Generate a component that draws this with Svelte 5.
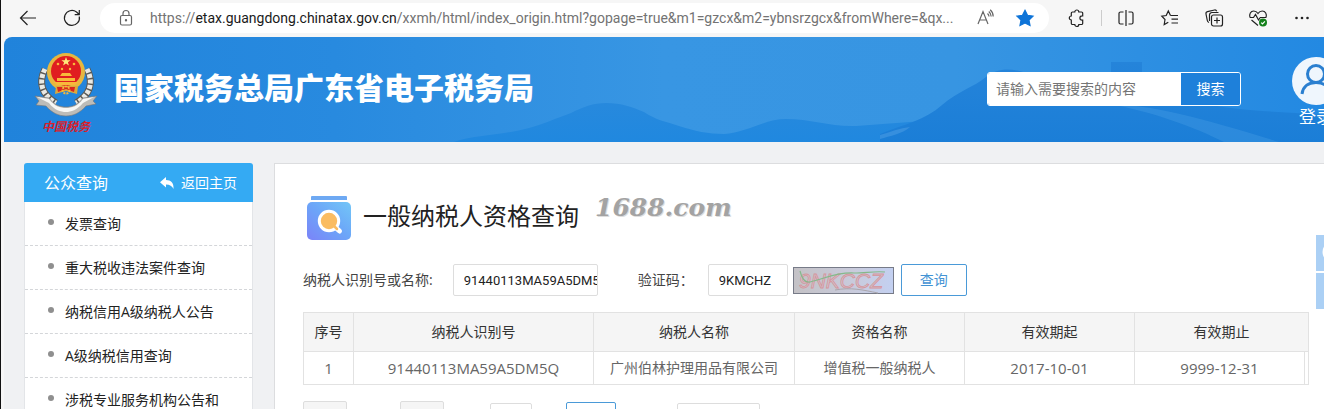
<script>
  const links = [
    '发票查询',
    '重大税收违法案件查询',
    '纳税信用A级纳税人公告',
    'A级纳税信用查询',
    '涉税专业服务机构公告和',
  ];
  const columns = ['序号', '纳税人识别号', '纳税人名称', '资格名称', '有效期起', '有效期止'];
  const rows = [
    ['1', '91440113MA59A5DM5Q', '广州伯林护理用品有限公司', '增值税一般纳税人', '2017-10-01', '9999-12-31'],
  ];
  const isLatin = (text) => /^[\w-]+$/.test(text);
  let keyword = $state('');
  let taxpayer = $state('91440113MA59A5DM5Q');
  let code = $state('9KMCHZ');
</script>

<div class="window">
  <div class="toolbar">
    <div class="nav">
      <button aria-label="后退">
        <svg viewBox="0 0 20 20"><path d="M18 10H2.500M9.500 3 2.500 10l7 7" /></svg>
      </button>
      <button aria-label="刷新">
        <svg viewBox="0 0 20 20"><path d="M17.300 8.500A7.500 7.500 0 1 1 14.500 4L17 6.300M17.300 2v4.600h-4.600" /></svg>
      </button>
    </div>
    <div class="address">
      <svg class="grey" viewBox="0 0 20 20"><rect x="4.500" y="7.500" width="11" height="9.500" rx="1.500" /><path d="M7 7.500V5.500a3 3 0 0 1 6 0v2" /><circle cx="10" cy="12.300" r=".6" fill="#555" /></svg>
      <span class="url">https://<b>etax.guangdong.chinatax.gov.cn</b>/xxmh/html/index_origin.html?gopage=true&amp;m1=gzcx&amp;m2=ybnsrzgcx&amp;fromWhere=&amp;qx...</span>
      <button aria-label="大声朗读">
        <svg class="grey" viewBox="0 0 20 20"><path d="M2 16 7 3.500 12 16M3.700 12h6.600M11.500 5.500a4 4 0 0 1 1.500 3M12.800 3.500a7 7 0 0 1 2.400 5M14.200 1.800a9 9 0 0 1 3 6.700" /></svg>
      </button>
      <button aria-label="收藏">
        <svg viewBox="0 0 20 20"><path class="star" d="m10 2.300 2.500 5 5.500.8-4 3.900 1 5.500-5-2.600-5 2.600 1-5.500-4-3.900 5.500-.8Z" /></svg>
      </button>
    </div>
    <div class="tools">
      <button aria-label="扩展">
        <svg viewBox="0 0 20 20"><path d="M5.500 4h2.300a2 2 0 0 1 4 0h2.700a1.200 1.200 0 0 1 1.200 1.200v2.600h-.6a2.200 2.200 0 0 0 0 4.400h.6v3.100a1.200 1.200 0 0 1-1.200 1.200h-2.700a2 2 0 0 1-4 0H5.500a1.200 1.200 0 0 1-1.200-1.200V12a2 2 0 0 1 0-4V5.200A1.200 1.200 0 0 1 5.500 4Z" /></svg>
      </button>
      <span class="divider"></span>
      <button aria-label="分屏">
        <svg viewBox="0 0 20 20"><path d="M7.500 4h-3A1.500 1.500 0 0 0 3 5.500v9A1.500 1.500 0 0 0 4.500 16h3M10 2v16M12.500 4h3A1.500 1.500 0 0 1 17 5.500v9a1.500 1.500 0 0 1-1.500 1.500h-3" /></svg>
      </button>
      <button aria-label="收藏夹">
        <svg viewBox="0 0 20 20"><path d="M10.500 7.500 8.300 3 6.200 7.500 1.800 8.200 5 11.500l-.8 5 4.100-2.300M10.500 7.500h7.500M11.500 11.200H18M11.500 15H18" /></svg>
      </button>
      <button aria-label="集锦">
        <svg viewBox="0 0 20 20"><rect x="7.500" y="7" width="11" height="11" rx="2" /><path d="M13 9.500v6M10 12.500h6M5 14.500c-1-.4-1.500-1-1.700-2L2 6a2 2 0 0 1 1.500-2.300L10.500 2a2 2 0 0 1 2.200 1.200M5.500 13V7A2.500 2.500 0 0 1 8 4.500h6.500" /></svg>
      </button>
      <button aria-label="浏览器概要">
        <svg viewBox="0 0 20 20"><path d="M2 9.500C.8 6 2.800 3 5.700 3 7.700 3 9 4 10 5.500 11 4 12.300 3 14.300 3c3 0 4.900 3 3.700 6.500M2 9.500h3.500l2-3 3 5.500 1.800-2.500H18M3.500 12l6.500 5.500" /><circle cx="15" cy="14.500" r="4" fill="#13801b" stroke="none" /><path class="tick" d="m13.200 14.600 1.300 1.300 2.400-2.600" /></svg>
      </button>
      <button aria-label="更多">
        <svg viewBox="0 0 20 20"><g fill="#222" stroke="none"><circle cx="4.500" cy="10" r="1.300" /><circle cx="10" cy="10" r="1.300" /><circle cx="15.500" cy="10" r="1.300" /></g></svg>
      </button>
    </div>
  </div>

  <div class="page">
    <header>
      <svg class="scenery" viewBox="0 0 1320 105" preserveAspectRatio="none">
        <defs>
          <linearGradient id="sky"><stop offset="0" stop-color="#2083db" /><stop offset=".25" stop-color="#288adf" /><stop offset=".5" stop-color="#3896e3" /><stop offset=".72" stop-color="#3795e2" /><stop offset="1" stop-color="#2389e2" /></linearGradient>
          <linearGradient id="hill" x2="0" y2="1"><stop offset="0" stop-color="#2789dd" /><stop offset="1" stop-color="#2088df" /></linearGradient>
          <linearGradient id="ridge" x2="0" y2="1"><stop offset="0" stop-color="#2584da" /><stop offset="1" stop-color="#1b7ed7" /></linearGradient>
        </defs>
        <path fill="url(#sky)" d="M0 0h1320v105H0z" />
        <path fill="url(#hill)" d="M450 105c20-7 50-7 75-14 17-5 25-9 42-15 12-6 22-10 35-10 16 0 26 4 38 9 12 8 20 9 35 14 15 5 30 8 45 8 22-1 40-15 62-15 25 0 45 8 70 7l80-6v22Z" />
        <path fill="url(#ridge)" d="M876 105v-8c25-10 45-14 62-29 16-14 32-18 44-28 14-11 30-9 50 0 25 5 50 5 75 2V25h31v12c20 5 35 24 60 29 35 8 70 8 122 12v27Z" />
        <path fill="#54a5e8" opacity=".3" d="M1105 67c40 0 100 16 170 38h-55c-30-15-70-30-115-38Z" />
        <path fill="#66b0ec" opacity=".35" d="M876 98c10-3 20-7 30-8-8 7-20 9-30 12Z" />
      </svg>

      <div class="logo">
        <svg viewBox="0 0 64 66">
          <g fill="none" stroke="#5c5a55" stroke-width="7"><path d="M11 18C4 32 8 44 22 52M53 18c7 14 3 26-11 34" /></g>
          <g fill="none" stroke="#e9e9e4" stroke-width="5" stroke-dasharray="4 1.500"><path d="M11 18C4 32 8 44 22 52M53 18c7 14 3 26-11 34" /></g>
          <path fill="#bdbcb8" stroke="#777" stroke-width=".6" d="m1 45 14 2c5 7 11 9 17 9s12-2 17-9l14-2-4 5 3 3-10 2c-6 7-13 10-20 10s-14-3-20-10l-10-1 3-4Z" />
          <path fill="#f7f7f5" d="m3 46 12 2c5 7 11 9 17 9s12-2 17-9l11-2-11 6c-6 7-12 9-17 9s-12-2-17-9Z" />
          <circle cx="32" cy="21" r="19" fill="#e7b73f" />
          <path fill="#dca93b" d="m22 35-1 8 11-3 11 3 1-8Z" />
          <circle cx="32" cy="20" r="15" fill="#e01d20" />
          <path fill="#d9251f" d="m23 36 1 5 8-3 8 3 1-5Z" />
          <path fill="#ffe97a" d="m32 6 1.200 3.200h3.400l-2.700 2 1 3.300-2.900-2-2.900 2 1-3.300-2.700-2h3.400Z" />
          <g fill="#f8b93a"><circle cx="24" cy="13" r="1.300" /><circle cx="28" cy="18" r="1.200" /><circle cx="36" cy="18" r="1.200" /><circle cx="40" cy="13" r="1.300" /><path d="M26 25h12l-2-3h-8Zm-3 2h18v3H23Zm-3 4h24l-3 3H23Z" /></g>
          <circle cx="32" cy="39" r="3.500" fill="none" stroke="#f8b93a" stroke-width="2" stroke-dasharray="2 1" />
        </svg>
        <span>中国税务</span>
      </div>
      <h1>国家税务总局广东省电子税务局</h1>
      <form class="search">
        <input aria-label="搜索内容" placeholder="请输入需要搜索的内容" bind:value={keyword} />
        <button type="button">搜索</button>
      </form>
      <a class="login" href="#login">
        <svg viewBox="0 0 48 48"><circle cx="24" cy="24" r="24" fill="#eff6fd" /><g fill="none" stroke="#2a7fd0" stroke-width="3"><circle cx="24" cy="17" r="8.500" /><path d="M10 37c1-8 7-11.500 14-11.500S37 29 38 37" /></g></svg>
        <span>登录</span>
      </a>
    </header>

    <div class="body">
      <aside>
        <div class="side-head">
          <h2>公众查询</h2>
          <a href="#home">
            <svg viewBox="0 0 14 12"><path fill="#fff" d="M6 0v3c5 0 8 3 7.500 9C12 9 10 7.500 6 7.500v3L0 5.200Z" /></svg>
            返回主页
          </a>
        </div>
        <ul>
          {#each links as link}
            <li><a href="#query">{link}</a></li>
          {/each}
        </ul>
      </aside>

      <main>
        <div class="title">
          <svg viewBox="0 0 44 44">
            <defs>
              <linearGradient id="card" x1="0" y1="1" x2="1" y2="0"><stop offset="0" stop-color="#7b83f8" /><stop offset=".5" stop-color="#6ca5f8" /><stop offset="1" stop-color="#72c6f7" /></linearGradient>
            </defs>
            <path fill="#6ea9f3" d="M5 0h34a1 1 0 0 1 1 1v3H4V1a1 1 0 0 1 1-1Z" />
            <rect y="6" width="44" height="38" rx="5" fill="url(#card)" />
            <path d="m28 31 4.500 4" stroke="#fff" stroke-width="5" stroke-linecap="round" />
            <circle cx="22" cy="25" r="9.700" fill="#fabc62" stroke="#fff" stroke-width="3" />
            <path d="m26 29 4 4" stroke="#fabc62" stroke-width="2.500" stroke-linecap="round" />
          </svg>
          <h2>一般纳税人资格查询</h2>
          <span class="mark">1688.com</span>
        </div>

        <form class="query">
          <label for="taxpayer">纳税人识别号或名称:</label>
          <input id="taxpayer" class="wide" bind:value={taxpayer} />
          <label for="code">验证码：</label>
          <input id="code" class="short" bind:value={code} />
          <svg class="captcha" viewBox="0 0 101 27">
            <defs><linearGradient id="noise"><stop offset="0" stop-color="#c4c2c6" /><stop offset=".6" stop-color="#c9cbdc" /><stop offset="1" stop-color="#c3d0f1" /></linearGradient></defs>
            <rect x=".5" y=".5" width="100" height="26" fill="url(#noise)" stroke="#777b88" />
            <text x="6" y="21">9NKCCZ</text>
            <path fill="none" stroke="#84b98a" stroke-width="1.200" d="M7 4c2 8 5 12 10 11 14-3 26-10 44-9 12 0 20-2 31-1" />
            <path fill="none" stroke="#aaa6ad" d="M42 23c16-3 28 0 43 3" />
          </svg>
          <button type="button">查询</button>
        </form>

        <table>
          <colgroup>
            <col class="c-index" /><col class="c-id" /><col /><col class="c-std" /><col class="c-std" /><col class="c-std" /><col class="c-edge" />
          </colgroup>
          <thead>
            <tr>
              {#each columns as column, i}
                <th colspan={i === columns.length - 1 ? 2 : 1}>{column}</th>
              {/each}
            </tr>
          </thead>
          <tbody>
            {#each rows as row}
              <tr>
                {#each row as cell}<td class:latin={isLatin(cell)}>{cell}</td>{/each}
                <td></td>
              </tr>
            {/each}
          </tbody>
        </table>

        <div class="pager">
          <button class="step" aria-label="上一页"></button>
          <button class="step" aria-label="下一页"></button>
          <input aria-label="页码" />
          <button class="go" aria-label="确定"></button>
          <select aria-label="每页条数"></select>
        </div>
      </main>
    </div>

    <div class="float">
      <a href="#service" aria-label="客服"><svg viewBox="0 0 24 24"><circle cx="12" cy="12" r="9" fill="none" stroke="#fff" stroke-width="3" /></svg></a>
      <a href="#top" aria-label="顶部"></a>
    </div>
  </div>
</div>

<style>
  :global(body) { margin: 0; }
  * { box-sizing: border-box; }
  .window {
    height: 100vh;
    overflow: hidden;
    display: flex;
    flex-direction: column;
    position: relative;
    border-left: 1px solid #111;
    background: #f6f6f6;
    font: 14px/20px "Open Sans", "Noto Sans CJK SC", sans-serif;
    color: #222;
  }
  button, input, select { font: inherit; color: inherit; margin: 0; }
  h1, h2, ul { margin: 0; padding: 0; font-weight: 400; }
  a { color: inherit; text-decoration: none; }
  svg { display: block; flex: none; }

  .toolbar {
    display: flex;
    align-items: center;
    gap: 18px;
    padding: 3px 12px 4px 17px;
  }
  .toolbar button { padding: 0; border: 0; background: none; }
  .toolbar svg { width: 20px; height: 20px; fill: none; stroke: #222; stroke-width: 1.2; }
  .toolbar .grey { stroke: #666; }
  .toolbar .star { fill: #0e74d8; stroke: #0e74d8; }
  .toolbar .tick { stroke: #fff; }
  .nav, .tools { display: flex; align-items: center; gap: 24px; }
  .address {
    flex: 1;
    min-width: 0;
    display: flex;
    align-items: center;
    gap: 14px;
    height: 30px;
    padding: 0 14px 0 16px;
    border-radius: 15px;
    background: #fff;
  }
  .address button + button { margin-left: 5px; }
  .url {
    flex: 1;
    min-width: 0;
    overflow: hidden;
    font-family: Roboto, sans-serif;
    white-space: nowrap;
    color: #737373;
  }
  .url b { font-weight: 400; color: #1a1a1a; }
  .divider { width: 1px; height: 16px; margin: 0 -10px; background: #ccc; }

  .page {
    flex: 1;
    min-height: 0;
    margin-left: 3px;
    overflow: hidden;
    border-top-left-radius: 8px;
    background: #f0f1f3;
  }
  header {
    position: relative;
    display: flex;
    align-items: center;
    height: 105px;
    padding-left: 30px;
    color: #fff;
  }
  header > * { position: relative; }
  .scenery { position: absolute; inset: 0; width: 100%; height: 100%; }
  .logo { width: 64px; margin-top: 6px; }
  .logo svg { width: 64px; height: 66px; }
  .logo span {
    display: block;
    font: italic 700 12px/18px "Noto Sans CJK SC", sans-serif;
    color: #d8202c;
    text-align: center;
  }
  h1 {
    margin: 0 auto 4px 16px;
    font-size: 30px;
    line-height: 40px;
    font-weight: 900;
    white-space: nowrap;
  }
  .search {
    display: flex;
    height: 34px;
    width: 254px;
    margin-bottom: 2px;
    border: 1px solid #fff;
    border-radius: 3px;
    overflow: hidden;
  }
  .search input {
    flex: 1;
    min-width: 0;
    padding: 0 8px;
    border: 0;
    background: #fff;
    color: #333;
  }
  .search input::placeholder { color: #757575; opacity: 1; }
  .search button { width: 59px; padding: 0; border: 0; background: #1e80da; color: #fff; }
  .login { margin: 6px -16px 0 51px; width: 48px; text-align: center; }
  .login svg { width: 48px; height: 48px; }
  .login span { display: block; font-size: 17px; line-height: 24px; }

  .body { display: flex; align-items: flex-start; gap: 21px; padding: 21px 0 0 20px; }
  aside { width: 229px; flex: none; background: #fff; border: 1px solid #e3e5e8; border-top: 0; border-radius: 3px 3px 0 0; }
  .side-head {
    display: flex;
    align-items: center;
    justify-content: space-between;
    height: 39px;
    margin: 0 -1px;
    padding: 0 16px 0 20px;
    border-radius: 3px 3px 0 0;
    background: #34aaf3;
    color: #fff;
  }
  .side-head h2 { font-size: 16px; }
  .side-head a { display: flex; align-items: center; gap: 7px; }
  .side-head svg { width: 14px; height: 12px; }
  ul { list-style: none; }
  li {
    display: flex;
    align-items: center;
    gap: 11px;
    height: 44px;
    padding-left: 23px;
    border-bottom: 1px dashed #d4d6d9;
    white-space: nowrap;
  }
  li::before { content: ""; width: 6px; height: 6px; margin-bottom: 3px; border-radius: 50%; background: #8f8f8f; }

  main {
    flex: 1;
    min-width: 0;
    padding: 32px 15px 0 28px;
    border: 1px solid #dcdddf;
    border-right: 0;
    background: #fff;
  }
  .title { display: flex; align-items: center; padding-left: 4px; }
  .title svg { width: 44px; height: 44px; }
  .title h2 { margin: 0 0 4px 12px; font-size: 24px; line-height: 32px; }
  .mark {
    align-self: flex-start;
    margin-left: 16px;
    font: italic 700 25px/24px "DejaVu Serif", serif;
    color: #a3a3a3;
    text-shadow: 1px 1px 0 #ddd;
  }
  .query { display: flex; align-items: center; margin-top: 24px; color: #444; }
  .query input {
    height: 32px;
    padding: 0 0 0 10px;
    border: 1px solid #ddd;
    border-radius: 2px;
    background: #fff;
    color: #222;
    font-family: Roboto, sans-serif;
    font-size: 13px;
  }
  .query .wide { width: 145px; margin: 0 40px 0 20px; }
  .query .short { width: 80px; margin: 0 5px 0 14px; }
  .captcha { width: 101px; height: 27px; }
  .captcha text { font: italic 21px "Liberation Sans", sans-serif; fill: #cfc3cb; stroke: #d6949c; stroke-width: .8; }
  .query button {
    width: 66px;
    height: 32px;
    margin-left: 7px;
    padding: 0;
    border: 1px solid #4a9ad8;
    border-radius: 2px;
    background: #fff;
    color: #4393d4;
  }
  table {
    width: 100%;
    margin-top: 16px;
    border-collapse: collapse;
    table-layout: fixed;
    text-align: center;
  }
  .c-index { width: 50px; }
  .c-id { width: 240px; }
  .c-std { width: 170px; }
  .c-edge { width: 4px; }
  th, td { padding: 0; border: 1px solid #e2e2e2; }
  th { height: 39px; background: #f5f5f5; font-weight: 400; color: #333; }
  td { height: 33px; color: #666; }
  .latin { font-size: 15px; }
  .pager { display: flex; align-items: flex-start; padding-top: 16px; }
  .pager > * { height: 30px; padding: 0; border: 1px solid #ddd; border-radius: 2px; background: #fff; }
  .pager .step { width: 44px; margin-right: 53px; background: #f5f5f5; }
  .pager .step + .step { margin-right: 46px; }
  .pager input { width: 42px; margin: 2px 34px 0 0; }
  .pager .go { width: 50px; margin: 1px 61px 0 0; border-color: #4a9ad8; }
  .pager select { width: 83px; margin-top: 2px; appearance: none; }

  .float { position: absolute; top: 235px; right: -28px; width: 36px; display: grid; gap: 2px; }
  .float a { display: flex; align-items: flex-start; height: 36px; padding: 5px; background: #abd0f5; }
  .float svg { width: 24px; height: 24px; }
</style>
